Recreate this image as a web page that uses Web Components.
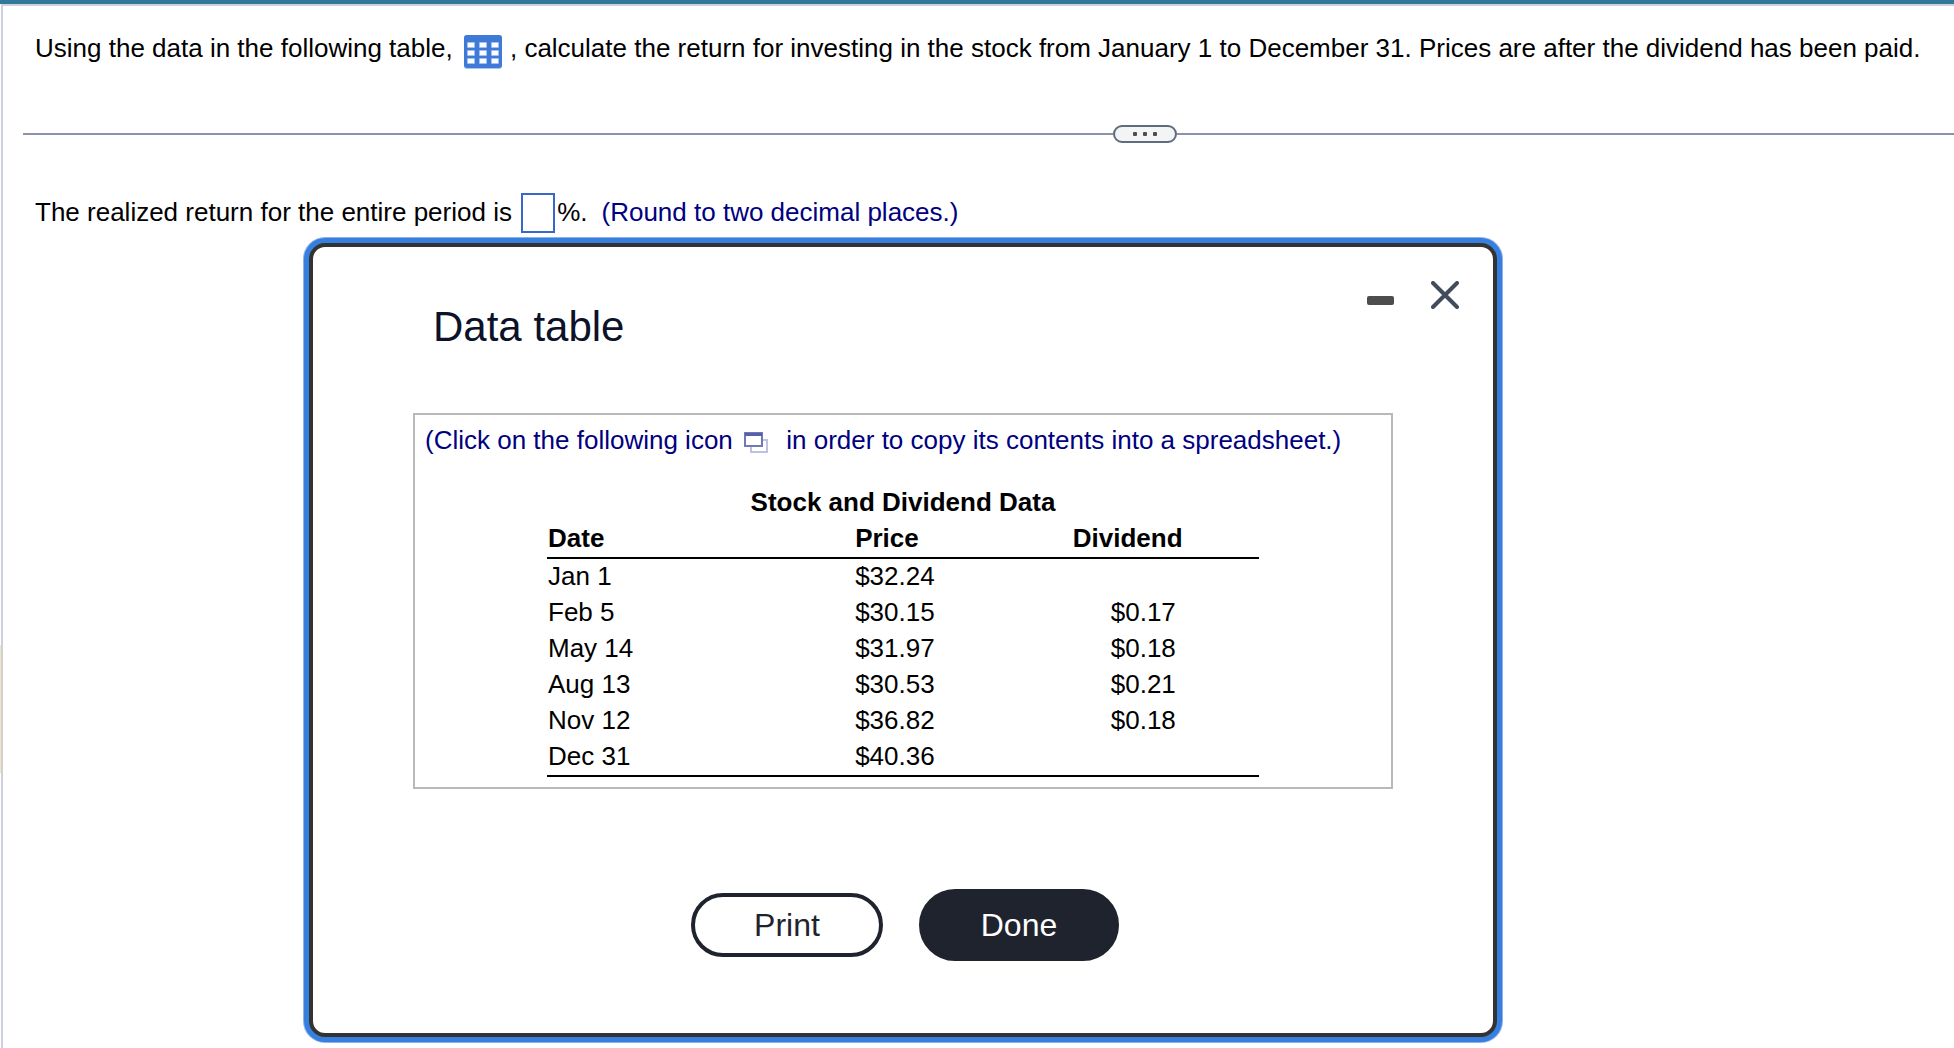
<!DOCTYPE html>
<html lang="en">
<head>
<meta charset="utf-8">
<title>Realized return</title>
<style>
  body {
    margin: 0;
    background: #fff;
    color: #000;
    font: 26px/36px "Liberation Sans", Arial, sans-serif;
  }
</style>
</head>
<body>
<exercise-page>
  <question-prompt slot="prompt">Using the data in the following table, <table-icon></table-icon>, calculate the return for investing in the stock from January 1 to December 31. Prices are after the dividend has been paid.</question-prompt>
  <pane-divider></pane-divider>
  <answer-line hint="(Round to two decimal places.)">The realized return for the entire period is</answer-line>
  <data-dialog heading="Data table">
    <stock-table></stock-table>
  </data-dialog>
</exercise-page>

<script>
const attach = (element, html) => {
  const template = document.createElement('template')
  template.innerHTML = html
  const shadow = element.attachShadow({mode: 'open'})
  shadow.append(template.content.cloneNode(true))
  return shadow
}

class ExercisePage extends HTMLElement {
  constructor() {
    super()
    attach(this, `
      <style>
        :host {
          display: flex;
          flex-direction: column;
          min-height: 100vh;
          box-sizing: border-box;
          padding-left: 1px;
          border-top: 4px solid #317797;
          background: linear-gradient(#f7e5b4, #f7e5b4) 0 641px / 1px 128px no-repeat;
        }

        main {
          flex: 1;
          border-top: 2px solid #cdd0dd;
          border-left: 2px solid #cdd0dd;
        }
      </style>

      <main>
        <slot name="prompt"></slot>
        <slot></slot>
      </main>
    `)
  }
}

customElements.define('exercise-page', ExercisePage)

class QuestionPrompt extends HTMLElement {
  constructor() {
    super()
    attach(this, `
      <style>
        :host {
          display: block;
          padding: 24px 20px 56px 32px;
        }

        p {
          margin: 0;
        }
      </style>

      <p><slot></slot></p>
    `)
  }
}

customElements.define('question-prompt', QuestionPrompt)

class TableIcon extends HTMLElement {
  constructor() {
    super()
    const cells = [7, 15, 23].map((y) => [3, 15, 27].map((x) => `
      <rect x="${x}" y="${y}" width="8" height="6" rx="1" fill="#a3c0f0" />
      <rect x="${x + 1}" y="${y + 1}" width="6" height="4" fill="#fff" />
    `).join('')).join('')

    attach(this, `
      <style>
        :host {
          display: inline-block;
          margin: 0 8px 0 4px;
          vertical-align: -12px;
          height: 34px;
        }

        button {
          display: block;
          padding: 0;
          border: none;
          background: none;
          cursor: pointer;
        }

        svg {
          display: block;
        }
      </style>

      <button type="button" aria-label="Open data table">
        <svg width="38" height="34" viewBox="0 0 38 34">
          <rect width="38" height="34" rx="3" fill="#a9c5f0" />
          <rect width="38" height="33" rx="3" fill="#3f7ad6" />
          ${cells}
        </svg>
      </button>
    `)
  }
}

customElements.define('table-icon', TableIcon)

class PaneDivider extends HTMLElement {
  constructor() {
    super()
    attach(this, `
      <style>
        :host {
          display: grid;
          grid-template-columns: 1090fr 64px 777fr;
          align-items: center;
          padding-left: 20px;
          margin-bottom: 50px;
        }

        .line {
          height: 2px;
          background: #8a94a6;
        }

        button {
          display: flex;
          align-items: center;
          justify-content: center;
          gap: 6px;
          height: 18px;
          padding: 0;
          border: 2px solid #5f6c7b;
          border-radius: 9px;
          background: #f2f4f6;
          cursor: row-resize;
        }

        i {
          width: 4px;
          height: 4px;
          border-radius: 1px;
          background: #4d4d4d;
        }
      </style>

      <div class="line"></div>
      <button type="button" aria-label="Resize"><i></i><i></i><i></i></button>
      <div class="line"></div>
    `)
  }
}

customElements.define('pane-divider', PaneDivider)

class AnswerLine extends HTMLElement {
  constructor() {
    super()
    const shadow = attach(this, `
      <style>
        :host {
          display: block;
          padding: 0 20px 10px 32px;
        }

        input {
          width: 34px;
          height: 40px;
          box-sizing: border-box;
          margin: 0 2px;
          padding: 0 2px;
          border: 2px solid #3a66c9;
          border-radius: 0;
          outline: none;
          background: #fff;
          font: inherit;
          vertical-align: -1px;
        }

        .hint {
          margin-left: 14px;
          color: #000080;
        }
      </style>

      <label for="answer"><slot></slot></label>
      <input id="answer" type="text" inputmode="decimal">%.<span class="hint"></span>
    `)
    shadow.querySelector('.hint').textContent = this.getAttribute('hint')
  }
}

customElements.define('answer-line', AnswerLine)

class DataDialog extends HTMLElement {
  constructor() {
    super()
    const shadow = attach(this, `
      <style>
        :host {
          display: block;
          margin: 0 457px 6px 306px;
        }

        section {
          border: 4px solid #333;
          border-radius: 16px;
          background: #fff;
          box-shadow: 0 0 0 5px #377fde, 0 0 0 6px #8fb0ee;
        }

        header {
          display: flex;
          align-items: flex-start;
          gap: 36px;
          padding: 34px 34px 0 120px;
        }

        h2 {
          flex: 1;
          margin: 22px 0 0;
          color: #0b1229;
          font-size: 42px;
          font-weight: normal;
          line-height: 48px;
        }

        header button {
          padding: 0;
          border: none;
          background: none;
          cursor: pointer;
        }

        svg {
          display: block;
        }

        .content {
          margin: 62px 100px 100px;
          padding: 7px 10px 10px;
          border: 2px solid #b9b9b9;
        }

        footer {
          display: flex;
          align-items: center;
          justify-content: center;
          gap: 36px;
          padding: 0 0 72px 4px;
        }

        footer button {
          width: 192px;
          height: 64px;
          padding: 0;
          border: 4px solid #1f232e;
          border-radius: 36px;
          background: #fff;
          color: #1f232e;
          font: inherit;
          font-size: 32px;
          cursor: pointer;
        }

        footer .primary {
          width: 200px;
          height: 72px;
          background: #1f232e;
          color: #fff;
        }
      </style>

      <section role="dialog" aria-labelledby="heading">
        <header>
          <h2 id="heading"></h2>
          <button type="button" aria-label="Minimize">
            <svg width="28" height="28" viewBox="0 0 28 28">
              <rect y="15" width="27" height="9" rx="2" fill="#4d4d4d" />
            </svg>
          </button>
          <button type="button" aria-label="Close">
            <svg width="28" height="28" viewBox="0 0 28 28">
              <path d="M2 2L26 26M26 2L2 26" stroke="#414d5a" stroke-width="4" stroke-linecap="round" />
            </svg>
          </button>
        </header>
        <div class="content"><slot></slot></div>
        <footer>
          <button type="button">Print</button>
          <button type="button" class="primary">Done</button>
        </footer>
      </section>
    `)
    shadow.querySelector('h2').textContent = this.getAttribute('heading')
  }
}

customElements.define('data-dialog', DataDialog)

const stockRows = [
  ['Jan 1', '$32.24', ''],
  ['Feb 5', '$30.15', '$0.17'],
  ['May 14', '$31.97', '$0.18'],
  ['Aug 13', '$30.53', '$0.21'],
  ['Nov 12', '$36.82', '$0.18'],
  ['Dec 31', '$40.36', ''],
]

class StockTable extends HTMLElement {
  constructor() {
    super()
    const rows = stockRows.map(([date, price, dividend]) => `
      <tr><td>${date}</td><td>${price}</td><td>${dividend}</td></tr>
    `).join('')

    attach(this, `
      <style>
        :host {
          display: block;
        }

        p {
          margin: 0 0 26px;
          color: #000080;
        }

        p button {
          padding: 0;
          margin: 0 11px 0 4px;
          border: none;
          background: none;
          vertical-align: -4px;
          line-height: 0;
          cursor: copy;
        }

        table {
          width: calc(100% - 244px);
          margin: 0 auto;
          border-spacing: 0;
          border-bottom: 2px solid #000;
          table-layout: fixed;
        }

        caption {
          font-weight: bold;
        }

        th, td {
          padding: 0 0 0 1px;
          text-align: left;
        }

        th {
          padding-bottom: 1px;
          border-bottom: 2px solid #000;
        }

        td {
          height: 34px;
          padding-bottom: 2px;
          line-height: 34px;
        }

        th:nth-child(1) {
          width: 43%;
        }

        th:nth-child(2) {
          width: 30%;
        }

        th:nth-child(3) {
          padding-left: 4px;
        }

        td:nth-child(3) {
          padding-left: 42px;
        }
      </style>

      <p>(Click on the following icon <button type="button" aria-label="Copy to spreadsheet"><svg width="24" height="21" viewBox="0 0 24 21">
        <rect x="7" y="8" width="16" height="12" fill="#fff" stroke="#bcc2e0" stroke-width="2" />
        <rect x="1" y="1" width="17" height="13" fill="#fff" stroke="#7079b6" stroke-width="2" />
        <rect x="1" y="1" width="17" height="3" fill="#5662a8" />
      </svg></button> in order to copy its contents into a spreadsheet.)</p>
      <table>
        <caption>Stock and Dividend Data</caption>
        <thead>
          <tr><th scope="col">Date</th><th scope="col">Price</th><th scope="col">Dividend</th></tr>
        </thead>
        <tbody>${rows}</tbody>
      </table>
    `)
  }
}

customElements.define('stock-table', StockTable)
</script>
</body>
</html>
